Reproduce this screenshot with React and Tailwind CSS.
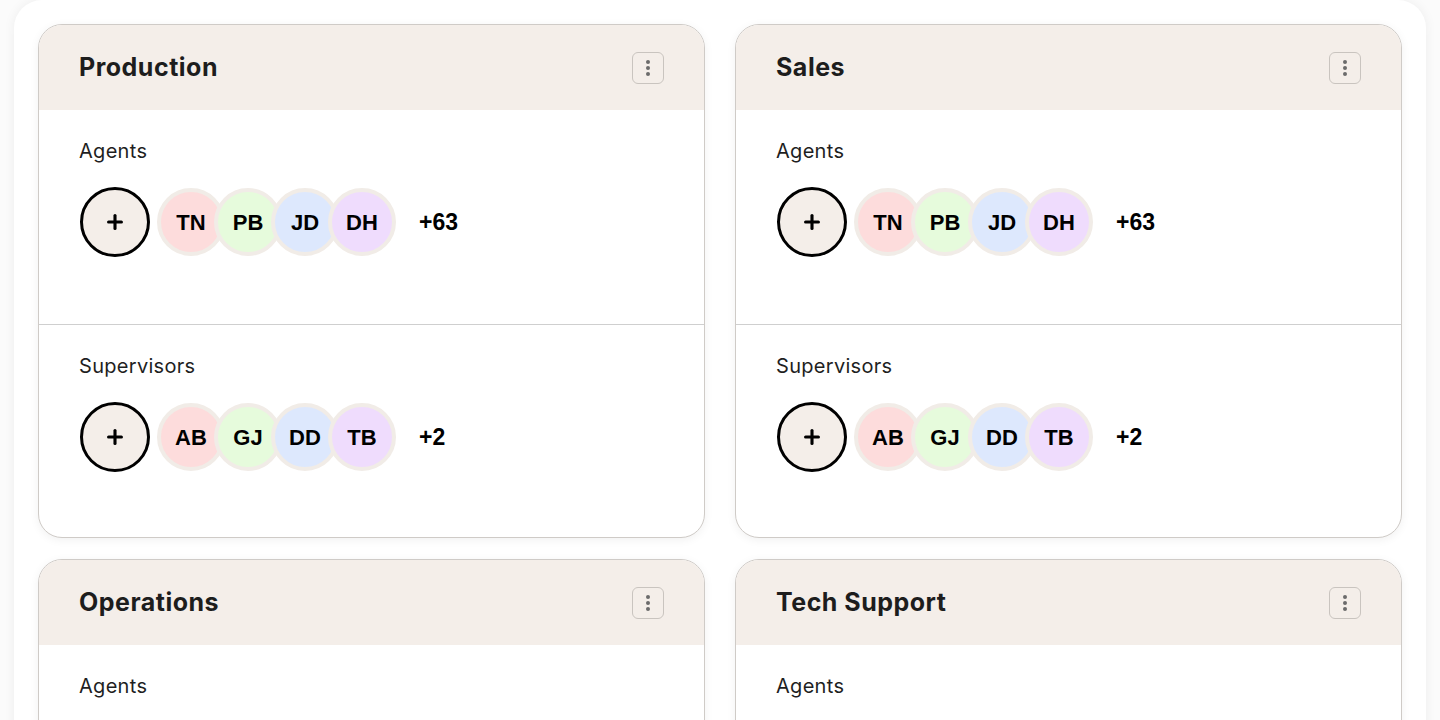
import { Plus } from 'lucide-react';

const teams = [
  { name: 'Production' },
  { name: 'Sales' },
  { name: 'Operations' },
  { name: 'Tech Support' },
];

const agents = ['TN', 'PB', 'JD', 'DH'];
const supervisors = ['AB', 'GJ', 'DD', 'TB'];
const tints = ['bg-[#fddcdc]', 'bg-[#e6fbdc]', 'bg-[#dde8fd]', 'bg-[#efdcfd]'];

const KebabButton = () => (
  <button className="w-8 h-8 rounded-md border border-[#c9c4bf] flex flex-col items-center justify-center gap-[2px]">
    <span className="w-[4px] h-[4px] rounded-full bg-[#6b6b6b]"></span>
    <span className="w-[4px] h-[4px] rounded-full bg-[#6b6b6b]"></span>
    <span className="w-[4px] h-[4px] rounded-full bg-[#6b6b6b]"></span>
  </button>
);

const MemberRow = ({ label, initials, extra }) => (
  <div className="px-[41px] pt-[29px]">
    <p className="text-[20px] text-[#1f1f1f] leading-6 tracking-[0.3px] -ml-[1px]">{label}</p>
    <div className="flex items-center mt-[24px]">
      <button className="w-[70px] h-[70px] rounded-full border-[3px] border-black bg-[#f4eee9] flex items-center justify-center">
        <Plus size={22} strokeWidth={3.4} className="text-black" />
      </button>
      <div className="flex items-center ml-[7px]">
        {initials.map((init, i) => (
          <div
            key={init}
            className={`w-[68px] h-[68px] rounded-full border-4 border-[#f1ece7] ${tints[i]} flex items-center justify-center font-['Liberation_Sans',Arial,sans-serif] font-bold text-[22px] text-black ${i > 0 ? '-ml-[11px]' : ''}`}
          >
            {init}
          </div>
        ))}
      </div>
      <span className="ml-[23px] font-['Liberation_Sans',Arial,sans-serif] font-bold text-[23px] text-black">{extra}</span>
    </div>
  </div>
);

const TeamCard = ({ name }) => (
  <div className="rounded-[24px] border border-[#cfcbc7] bg-white overflow-hidden shadow-[0_2px_10px_rgba(0,0,0,0.06)]">
    <div className="h-[85px] bg-[#f4eee9] flex items-center justify-between pl-[40px] pr-[40px]">
      <h2 className="text-[25px] font-bold text-[#1d1d1d] tracking-[0.5px]">{name}</h2>
      <KebabButton />
    </div>
    <div className="h-[215px] border-b border-[#cfcfcf]">
      <MemberRow label="Agents" initials={agents} extra="+63" />
    </div>
    <div className="h-[212px]">
      <MemberRow label="Supervisors" initials={supervisors} extra="+2" />
    </div>
  </div>
);

export default function App() {
  return (
    <div className="min-h-screen bg-[#fbfbfb] px-[14px] font-['Inter',sans-serif]">
      <div className="bg-white rounded-[28px] shadow-[0_0_12px_rgba(0,0,0,0.06)] px-6 pt-6 pb-6">
        <div className="grid grid-cols-2 gap-x-[30px] gap-y-[21px]">
          {teams.map((t) => (
            <TeamCard key={t.name} name={t.name} />
          ))}
        </div>
      </div>
    </div>
  );
}
